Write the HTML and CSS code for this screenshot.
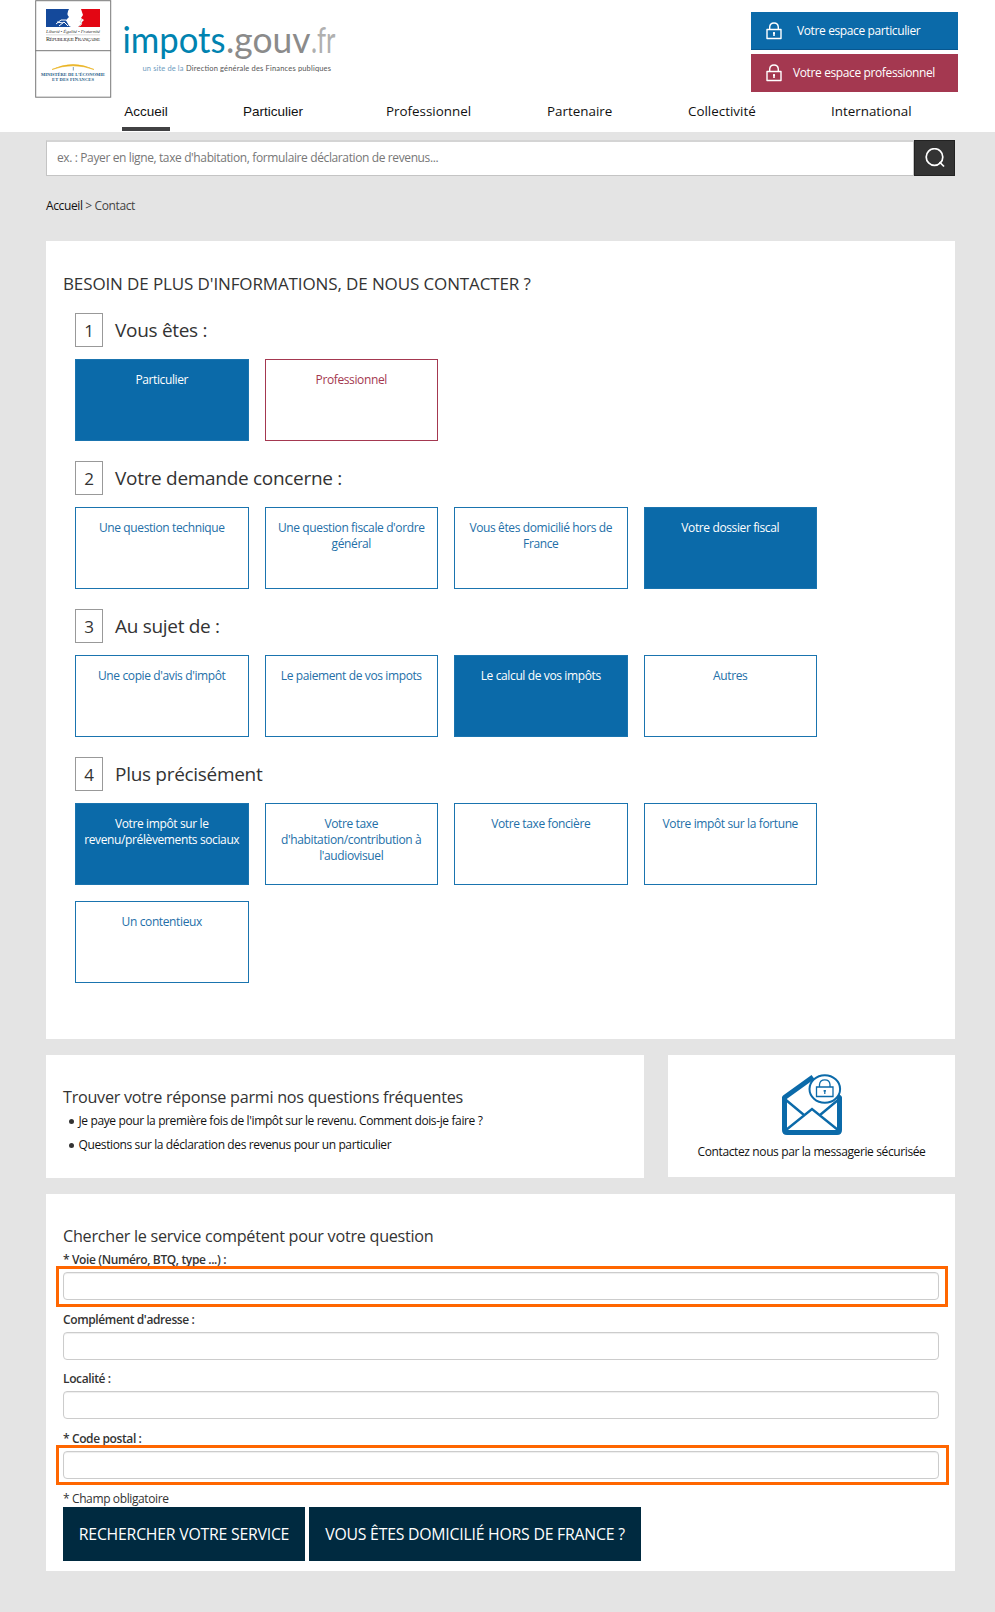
FILE: index.html
```html
<!DOCTYPE html>
<html lang="fr">
<head>
<meta charset="utf-8">
<title>Contact | impots.gouv.fr</title>
<link rel="stylesheet" href="styles.css">
</head>
<body>
<header class="header">
  <div class="brand">
    <svg class="seal" width="77" height="98" viewBox="0 0 77 98">
      <rect x=".7" y=".7" width="75" height="96.5" fill="#fff" stroke="#777"/>
      <path d="M.5 50.7H76" stroke="#777"/>
      <path d="M11 9H34Q31 14 34 17L31 20 34 26 36 27H11Z" fill="#14499b"/>
      <path d="M46 9H65V27H43Q48 25 47 22L49 20 46 18 48 15Z" fill="#e30613"/>
      <path d="M21 24L26 20 31 20 36 26M24 26L29 22 33 26M22 22L28 23" fill="none" stroke="#fff" stroke-width="1"/>
      <path d="M43 27L47 23 45 22 47 19" fill="none" stroke="#bbb" stroke-width=".7"/>
      <text class="motto" x="11" y="33" textLength="54">Liberté • Égalité • Fraternité</text>
      <path d="M11 34.8H65" stroke="#bbb" stroke-width=".5"/>
      <text class="republic" x="11" y="40.5" textLength="54"><tspan>R</tspan><tspan class="sc">ÉPUBLIQUE</tspan> <tspan>F</tspan><tspan class="sc">RANÇAISE</tspan></text>
      <path d="M17 69.5Q38 59.500 59 69.500Q38 62 17 69.500Z" fill="#e9b21f" stroke="#e9b21f" stroke-width=".6"/>
      <path d="M38.300 67V70.500" stroke="#7f9fb5" stroke-width="1"/>
      <text class="ministry" x="6" y="76" textLength="64">MINISTÈRE DE L’ÉCONOMIE</text>
      <text class="ministry" x="17" y="80.800" textLength="42">ET DES FINANCES</text>
    </svg>
    <svg class="wordmark" width="215" height="60" viewBox="0 0 215 60">
      <text class="word word-blue" x="-1.500" y="35" textLength="103" lengthAdjust="spacingAndGlyphs">impots</text>
      <text class="word word-grey" x="102" y="35" textLength="84.500" lengthAdjust="spacingAndGlyphs">.gouv</text>
      <text class="word word-light" x="187" y="35" textLength="24.500" lengthAdjust="spacingAndGlyphs">.fr</text>
      <text class="tag tag-blue" x="18.500" y="53" textLength="41">un site de la</text>
      <text class="tag" x="62" y="53" textLength="145">Direction générale des Finances publiques</text>
    </svg>
  </div>
  <div class="spaces">
    <a class="space space-part"><svg class="lock" viewBox="0 0 16 18"><path d="M1 7.500H15V16.500H1ZM3.700 7.500V5Q4 1 8 1T12.300 5V7.500"/><path class="key" d="M8 10V14M7 11.200H9"/></svg><span>Votre espace particulier</span></a>
    <a class="space space-pro"><svg class="lock" viewBox="0 0 16 18"><path d="M1 7.500H15V16.500H1ZM3.700 7.500V5Q4 1 8 1T12.300 5V7.500"/><path class="key" d="M8 10V14M7 11.200H9"/></svg><span>Votre espace professionnel</span></a>
  </div>
  <nav class="nav">
    <a class="nav-home">Accueil</a><a class="nav-part">Particulier</a><a class="nav-pro">Professionnel</a><a class="nav-partner">Partenaire</a><a class="nav-coll">Collectivité</a><a class="nav-int">International</a>
  </nav>
</header>
<main class="main">
  <form class="search">
    <div class="search-field">ex. : Payer en ligne, taxe d'habitation, formulaire déclaration de revenus...</div>
    <div class="search-button"><svg width="20" height="20" viewBox="0 0 20 20"><circle cx="9.500" cy="9" r="8.300"/><path d="M14.500 14L19 18.500"/></svg></div>
  </form>
  <div class="crumbs"><a>Accueil</a> &gt; Contact</div>

  <section class="card wizard">
    <h1>BESOIN DE PLUS D'INFORMATIONS, DE NOUS CONTACTER ?</h1>
    <div class="step">
      <h2><span class="num">1</span><span class="ask">Vous êtes :</span></h2>
      <div class="tiles"><a class="tile on">Particulier</a><a class="tile pro">Professionnel</a></div>
    </div>
    <div class="step">
      <h2><span class="num">2</span><span class="ask">Votre demande concerne :</span></h2>
      <div class="tiles"><a class="tile">Une question technique</a><a class="tile">Une question fiscale d'ordre général</a><a class="tile">Vous êtes domicilié hors de France</a><a class="tile on">Votre dossier fiscal</a></div>
    </div>
    <div class="step">
      <h2><span class="num">3</span><span class="ask">Au sujet de :</span></h2>
      <div class="tiles"><a class="tile">Une copie d'avis d'impôt</a><a class="tile">Le paiement de vos impots</a><a class="tile on">Le calcul de vos impôts</a><a class="tile">Autres</a></div>
    </div>
    <div class="step">
      <h2><span class="num">4</span><span class="ask">Plus précisément</span></h2>
      <div class="tiles"><a class="tile on">Votre impôt sur le<br>revenu/prélèvements sociaux</a><a class="tile">Votre taxe<br>d'habitation/contribution à<br>l'audiovisuel</a><a class="tile">Votre taxe foncière</a><a class="tile">Votre impôt sur la fortune</a><a class="tile">Un contentieux</a></div>
    </div>
  </section>

  <div class="row">
    <section class="card faq">
      <h3>Trouver votre réponse parmi nos questions fréquentes</h3>
      <ul><li>Je paye pour la première fois de l'impôt sur le revenu. Comment dois-je faire ?</li><li>Questions sur la déclaration des revenus pour un particulier</li></ul>
    </section>
    <section class="card contact">
      <svg width="60" height="62" viewBox="0 0 60 62" fill="none" stroke="#0b6aa9">
        <path d="M31 3L2.500 23.500V56Q2.500 58.500 5 58.500H55Q57.500 58.500 57.500 56V23.500L52 20" stroke-width="5" stroke-linejoin="round"/>
        <path d="M4 26L22 41M56 26L38 41M4 56L30 35L56 56" stroke-width="2.400"/>
        <ellipse cx="42.800" cy="15" rx="15.300" ry="13.800" fill="#fff" stroke-width="2"/>
        <path d="M34.500 13H51V22.500H34.500ZM37.500 13V10.500Q38 5.800 42.800 5.800T48 10.500V13" stroke-width="1.300"/>
        <path d="M42.800 16V20M41.500 16.800H44" stroke-width="1.200"/>
      </svg>
      <p>Contactez nous par la messagerie sécurisée</p>
    </section>
  </div>

  <section class="card service">
    <h3>Chercher le service compétent pour votre question</h3>
    <div class="field marked"><label for="voie">* Voie (Numéro, BTQ, type ...) :</label><input id="voie"></div>
    <div class="field"><label for="comp">Complément d'adresse :</label><input id="comp"></div>
    <div class="field"><label for="loc">Localité :</label><input id="loc"></div>
    <div class="field marked marked-cp"><label for="cp">* Code postal :</label><input id="cp"></div>
    <p class="note">* Champ obligatoire</p>
    <div class="actions"><a class="btn btn-find">RECHERCHER VOTRE SERVICE</a><a class="btn btn-abroad">VOUS ÊTES DOMICILIÉ HORS DE FRANCE ?</a></div>
  </section>
</main>
</body>
</html>
```
FILE: styles.css
```css
*, *::before, *::after { box-sizing: border-box; }
body { margin: 0; background: #e4e4e4; color: #333; font: 12px/16px "Open Sans", "Noto Sans", sans-serif; letter-spacing: -.38px; }
h1, h2, h3, p, ul { margin: 0; padding: 0; font-weight: 400; }

.header { height: 132px; background: #fff; display: grid; grid-template-columns: 1fr 244px; grid-template-rows: 98px 34px; }
.brand { display: flex; padding-left: 35px; letter-spacing: 0; }
.wordmark { margin: 18px 0 0 12px; overflow: visible; }
.motto { font: italic 5px "Liberation Serif", serif; fill: #444; }
.republic { font: 6px "Liberation Serif", serif; fill: #222; }
.sc { font-size: 5px; }
.ministry { font: bold 4.500px "Liberation Serif", serif; fill: #1d5c86; }
.word { font: 37px Lato, sans-serif; }
.word-blue { fill: #0083b0; }
.word-grey { fill: #8b8b8b; }
.word-light { fill: #b0b0b0; }
.tag { font: 7.500px Lato, sans-serif; fill: #555; }
.tag-blue { fill: #6d9cc0; }

.spaces { display: flex; flex-direction: column; gap: 4px; padding-top: 12px; }
.space { display: flex; align-items: center; width: 207px; height: 38px; padding-left: 15px; color: #fff; letter-spacing: -.38px; }
.space-part { background: #0b6aa9; border-bottom: 1px solid #075790; }
.space-pro { background: #a43850; }
.space-part span { margin: 1px 0 0 15px; }
.space-pro span { margin: -1px 0 0 11px; }
.lock { width: 16px; height: 18px; fill: none; stroke: #fff; stroke-width: 1.400; stroke-linejoin: round; }
.lock .key { stroke-width: 1.600; }

.nav { grid-column: 1 / -1; display: flex; padding: 5px 0 0 122px; color: #111; font-size: 13.400px; line-height: 17px; letter-spacing: 0; }
.nav a { flex: none; }
.nav-home { width: 48px; margin-right: 73px; height: 28px; border-bottom: 4px solid #414143; text-align: center; }
.nav-home, .nav-part { font-family: "Liberation Sans", sans-serif; font-size: 13.500px; }
.nav-part { width: 143px; }
.nav-pro { width: 161px; }
.nav-partner { width: 141px; }
.nav-coll { width: 143px; }

.main { padding: 8px 40px 0 46px; }
.search { display: flex; height: 36px; }
.search-field { width: 868px; background: #fff; border: 1px solid #c4c4c4; border-top: 2px solid #d4d4d4; padding: 8px 10px; color: #777; }
.search-button { width: 41px; background: #333; border: 1px solid #222; display: grid; place-items: center; }
.search-button svg { fill: none; stroke: #fff; stroke-width: 1.700; }
.crumbs { height: 65px; padding-top: 22px; color: #444; }
.crumbs a { color: #111; }

.card { background: #fff; }
.wizard { height: 798px; padding: 32px 17px 0; }
h1 { height: 40px; font-size: 17px; line-height: 21px; letter-spacing: -.12px; }
.step { padding-left: 12px; margin-bottom: 20px; }
h2 { display: flex; align-items: center; gap: 12px; height: 34px; margin-bottom: 12px; font-size: 19px; line-height: 24px; letter-spacing: -.3px; }
.num { display: grid; place-items: center; width: 28px; height: 34px; border: 1px solid #999; font-size: 17px; padding-top: 1px; }
.tiles { display: flex; flex-wrap: wrap; gap: 16px; }
.ask { margin-top: -1px; }
.tile { width: 173.500px; height: 82px; border: 1px solid #1a74af; padding: 12px 5px; text-align: center; color: #236fa8; }
.tile.on { background: #0b6aa9; color: #fff; }
.tile.pro { border-color: #a43850; color: #a43850; }

.row { display: flex; align-items: flex-start; gap: 24px; margin: 16px 0; }
.faq { width: 598px; height: 123px; padding: 31px 17px 0; }
h3 { font-size: 16.200px; line-height: 22px; letter-spacing: -.27px; }
.faq ul { list-style: none; color: #111; padding-top: 1px; }
.faq li { display: flex; align-items: center; height: 24px; gap: 5px; }
.faq li::before { content: ""; width: 5px; height: 5px; margin-left: 5.500px; border-radius: 50%; background: #333; }
.contact { width: 287px; height: 122px; padding-top: 19px; text-align: center; color: #111; }
.contact svg { display: block; margin: 0 auto 8px; }

.service { height: 377px; padding: 31px 16px 0 17px; }
.field { position: relative; height: 59.500px; }
.field label { display: block; height: 25px; font-weight: 600; line-height: 16px; padding-top: 5px; }
.field input { display: block; width: 876px; height: 28px; border: 1px solid #ccc; border-radius: 4px; background: #fff; box-shadow: inset 0 1px 1px #eee; padding: 0 8px; }
.marked::after { content: ""; position: absolute; left: -7px; top: 19px; width: 892px; height: 41px; border: 3px solid #f60; }
.marked-cp::after { width: 893px; height: 40px; }
.note { height: 22px; padding-top: 6px; }
.actions { display: flex; gap: 4px; }
.btn { display: grid; place-items: center; height: 54px; background: #002a40; color: #fff; font-size: 15.800px; letter-spacing: -.22px; }
.btn-find { width: 242px; }
.btn-abroad { width: 332px; }
```
